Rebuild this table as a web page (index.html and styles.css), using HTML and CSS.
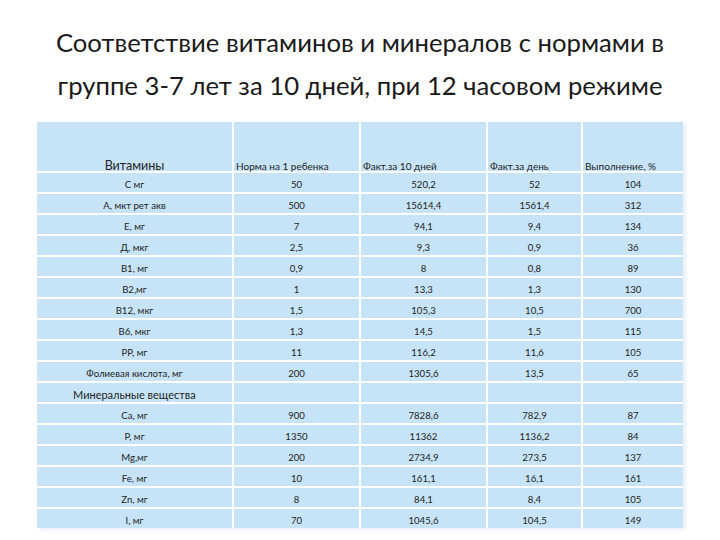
FILE: index.html
```html
<!DOCTYPE html>
<html lang="ru">
<head>
<meta charset="utf-8">
<link rel="stylesheet" href="styles.css">
</head>
<body>
<h1 class="title">Соответствие витаминов и минералов с нормами в<br>группе 3-7 лет за 10 дней, при 12 часовом режиме</h1>
<table class="grid">
  <colgroup>
    <col class="c1"><col class="c2"><col class="c3"><col class="c4"><col class="c5">
  </colgroup>
  <tr class="head">
    <th class="big">Витамины</th>
    <th class="left">Норма на 1 ребенка</th>
    <th class="left">Факт.за 10 дней</th>
    <th class="left">Факт.за день</th>
    <th class="left">Выполнение, %</th>
  </tr>
  <tr><td>С мг</td><td>50</td><td>520,2</td><td>52</td><td>104</td></tr>
  <tr><td>А, мкт рет акв</td><td>500</td><td>15614,4</td><td>1561,4</td><td>312</td></tr>
  <tr><td>Е, мг</td><td>7</td><td>94,1</td><td>9,4</td><td>134</td></tr>
  <tr><td>Д, мкг</td><td>2,5</td><td>9,3</td><td>0,9</td><td>36</td></tr>
  <tr><td>В1, мг</td><td>0,9</td><td>8</td><td>0,8</td><td>89</td></tr>
  <tr><td>В2,мг</td><td>1</td><td>13,3</td><td>1,3</td><td>130</td></tr>
  <tr><td>В12, мкг</td><td>1,5</td><td>105,3</td><td>10,5</td><td>700</td></tr>
  <tr><td>В6, мкг</td><td>1,3</td><td>14,5</td><td>1,5</td><td>115</td></tr>
  <tr><td>РР, мг</td><td>11</td><td>116,2</td><td>11,6</td><td>105</td></tr>
  <tr><td>Фолиевая кислота, мг</td><td>200</td><td>1305,6</td><td>13,5</td><td>65</td></tr>
  <tr><td class="section">Минеральные вещества</td><td></td><td></td><td></td><td></td></tr>
  <tr><td>Са, мг</td><td>900</td><td>7828,6</td><td>782,9</td><td>87</td></tr>
  <tr><td>Р, мг</td><td>1350</td><td>11362</td><td>1136,2</td><td>84</td></tr>
  <tr><td>Mg,мг</td><td>200</td><td>2734,9</td><td>273,5</td><td>137</td></tr>
  <tr><td>Fe, мг</td><td>10</td><td>161,1</td><td>16,1</td><td>161</td></tr>
  <tr><td>Zn, мг</td><td>8</td><td>84,1</td><td>8,4</td><td>105</td></tr>
  <tr><td>I, мг</td><td>70</td><td>1045,6</td><td>104,5</td><td>149</td></tr>
</table>
</body>
</html>
```

FILE: styles.css
```css
html, body {
  margin: 0;
  background: #ffffff;
}

body {
  width: 720px;
  height: 540px;
  overflow: hidden;
  font-family: Lato, "Open Sans", sans-serif;
  color: #1e1e1e;
}

.title {
  margin: 0;
  padding-top: 21px;
  font-weight: 400;
  font-size: 25.7px;
  line-height: 43px;
  text-align: center;
  color: #1a1a1a;
}

.grid {
  margin: 15px 0 0 37px;
  width: 646px;
  border-collapse: collapse;
  table-layout: fixed;
  background: #c6e3f7;
  box-shadow: 3px 2px 4px rgba(190, 210, 230, 0.35);
}

.c1 { width: 196px; }
.c2 { width: 127px; }
.c3 { width: 127px; }
.c4 { width: 95px; }
.c5 { width: 101px; }

.grid th,
.grid td {
  border: 2px solid #ffffff;
  padding: 4px 0 0;
  height: 15px;
  line-height: 12px;
  font-size: 9.6px;
  font-weight: 400;
  text-align: center;
  vertical-align: middle;
  white-space: nowrap;
}

.grid tr:first-child th { border-top: none; }
.grid tr:last-child td { border-bottom: none; }
.grid th:first-child, .grid td:first-child { border-left: none; }
.grid th:last-child, .grid td:last-child { border-right: none; }

.grid .head th {
  height: 49px;
  padding: 0 0 0;
  vertical-align: bottom;
  font-size: 10px;
  line-height: 10px;
}

.grid .head .big {
  font-size: 12.5px;
  line-height: 10px;
  padding-bottom: 0;
}

.grid .head .left {
  text-align: left;
  padding-left: 2px;
}

.grid .section {
  text-align: left;
  padding-left: 36px;
  font-size: 11px;
}
```
